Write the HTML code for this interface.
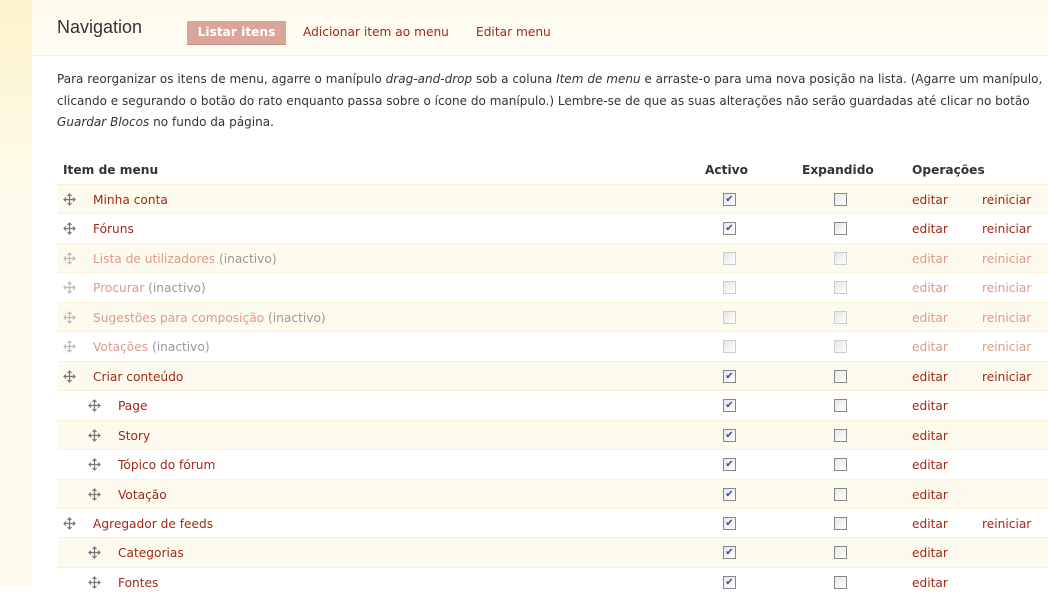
<!DOCTYPE html>
<html><head><meta charset="utf-8"><style>
body{margin:0;width:1048px;height:586px;overflow:hidden;background:#fff;font-family:"DejaVu Sans",Verdana,sans-serif;font-size:12.2px;color:#333;position:relative}
.strip{position:absolute;left:0;top:0;width:32px;height:586px;background:linear-gradient(#fdf3cc,#fdfbeb 200px)}
.panel{position:absolute;left:32px;top:0;right:0;height:586px;background:#fff}
.hdr{position:absolute;left:32px;top:0;right:0;height:55px;background:linear-gradient(#fefaea,#fffdf6);border-bottom:1px solid #f6f0dc}
h1{position:absolute;left:57px;top:17px;margin:0;font-family:"Liberation Sans",Arial,sans-serif;font-weight:normal;font-size:18px;color:#333}
.tab{position:absolute;top:25px;font-size:12.2px;color:#a1291a}
.tab.act{left:187px;top:21px;width:99px;height:23px;background:#dba59c;color:#fff;font-weight:bold;text-align:center;line-height:23px;border-bottom:1px solid #c88d84}
p{position:absolute;left:57px;top:69px;margin:0;width:1010px;line-height:21.5px;white-space:nowrap;font-size:12px;letter-spacing:0.02px}
.th{position:absolute;top:163px;font-weight:bold;color:#333}
.row{position:absolute;left:57px;width:991px;height:29px;border-top:1px solid #fcf3d7}
.odd{background:#fdfbee}
.ic{position:absolute;top:8px;width:13px;height:13px}
.t{position:absolute;top:8px;color:#a1291a}
.in .t,.in .op{color:#dd9a8c}
.g{color:#999}
.cb{position:absolute;top:8px;width:11px;height:11px;border:1px solid #888;background:linear-gradient(135deg,#e6e6e6,#fff);font-size:10px;line-height:11px;text-align:center;color:#3a4fa0}
.in .cb{border-color:#ccc}
.op{position:absolute;top:8px;color:#a1291a}
</style></head><body>
<div class="strip"></div><div class="panel"></div><div class="hdr"></div>
<h1>Navigation</h1>
<div class="tab act">Listar itens</div>
<div class="tab" style="left:303px">Adicionar item ao menu</div>
<div class="tab" style="left:476px">Editar menu</div>
<p>Para reorganizar os itens de menu, agarre o manípulo <i>drag-and-drop</i> sob a coluna <i>Item de menu</i> e arraste-o para uma nova posição na lista. (Agarre um manípulo,<br>clicando e segurando o botão do rato enquanto passa sobre o ícone do manípulo.) Lembre-se de que as suas alterações não serão guardadas até clicar no botão<br><i>Guardar Blocos</i> no fundo da página.</p>
<div class="th" style="left:63px">Item de menu</div>
<div class="th" style="left:705px">Activo</div>
<div class="th" style="left:802px">Expandido</div>
<div class="th" style="left:912px">Operações</div>
<div id="rows"></div>
<script>
var d=[["Minha conta",0,0,1,1],["Fóruns",0,0,1,1],["Lista de utilizadores",0,1,0,1],["Procurar",0,1,0,1],["Sugestões para composição",0,1,0,1],["Votações",0,1,0,1],["Criar conteúdo",0,0,1,1],["Page",1,0,1,0],["Story",1,0,1,0],["Tópico do fórum",1,0,1,0],["Votação",1,0,1,0],["Agregador de feeds",0,0,1,1],["Categorias",1,0,1,0],["Fontes",1,0,1,0]];
var h="";
d.forEach(function(r,i){
var y=184+i*29.45,x=r[1]?25:0,col=r[2]?"#bbb":"#777";
h+='<div class="row '+(i%2?'':'odd')+(r[2]?' in':'')+'" style="top:'+y+'px">'+
'<svg class="ic" style="left:'+(6+x)+'px" viewBox="0 0 13 13"><path d="M6.5 1v11M1 6.5h11M4.5 3l2-2 2 2M4.5 10l2 2 2-2M3 4.5l-2 2 2 2M10 4.5l2 2-2 2" stroke="'+col+'" fill="none" stroke-width="1.2"/></svg>'+
'<span class="t" style="left:'+(36+x)+'px">'+r[0]+(r[2]?' <span class="g">(inactivo)</span>':'')+'</span>'+
'<span class="cb" style="left:666px">'+(r[3]?'✔':'')+'</span>'+
'<span class="cb" style="left:777px"></span>'+
'<span class="op" style="left:855px">editar</span>'+(r[4]?'<span class="op" style="left:925px">reiniciar</span>':'')+'</div>';
});
document.getElementById("rows").innerHTML=h;
</script>
</body></html>
